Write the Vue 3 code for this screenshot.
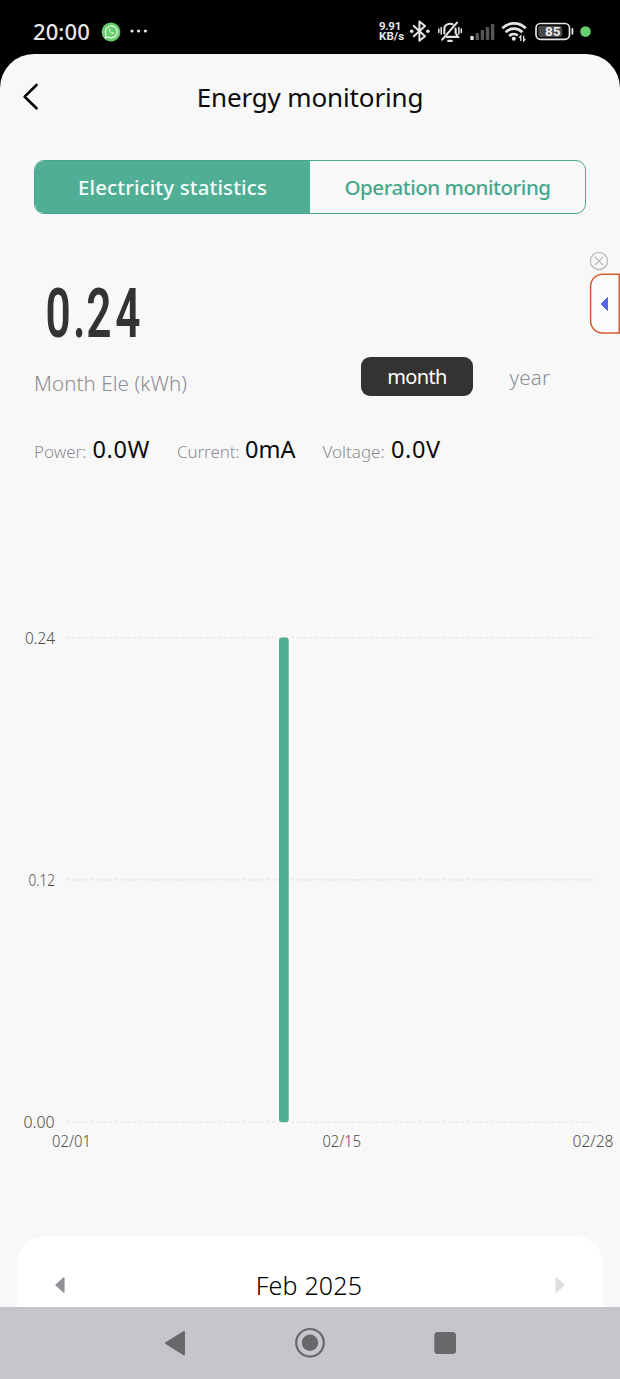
<script setup>
const readings = [
  { key: 'power', label: 'Power:', value: '0.0W' },
  { key: 'current', label: 'Current:', value: '0mA' },
  { key: 'voltage', label: 'Voltage:', value: '0.0V' },
]

// Chart geometry, in the units of the chart's own viewBox
const grid = [
  { label: '0.24', y: 17.5, x: 25, w: 30 },
  { label: '0.12', y: 259.9, x: 28.5, w: 26.5 },
  { label: '0.00', y: 502, x: 23.5, w: 31 },
]
const days = [
  { label: '02/01', x: 52, w: 39 },
  { label: '02/15', x: 322.5, w: 38.5 },
  { label: '02/28', x: 572.5, w: 41 },
]
const signal = [
  { x: 470.3, h: 4 },
  { x: 475.6, h: 7 },
  { x: 480.7, h: 10 },
  { x: 485.8, h: 13 },
  { x: 490.9, h: 16 },
]
</script>

<template>
  <div class="phone">
    <div class="status">
      <span class="clock">20:00</span>
      <svg class="chat" viewBox="0 0 20 20" width="20" height="20">
        <circle cx="10" cy="10" r="9.4" fill="#63ce6b" />
        <path d="M4.2 15.900l.9-3.200A5.900 5.900 0 1 1 7.400 15z" fill="none" stroke="#eefbef" stroke-width="1.2" stroke-linejoin="round" />
        <path d="M7.900 7.300c-.5 2 2.800 5.200 4.700 4.700l.6-.9-1.500-.9-.8.6c-.9-.4-1.500-1-1.900-1.900l.6-.7-.8-1.600z" fill="#eefbef" />
      </svg>
      <svg class="more" viewBox="0 0 20 6" width="20" height="6">
        <circle cx="3" cy="3" r="1.6" /><circle cx="9.600" cy="3" r="1.6" /><circle cx="16.400" cy="3" r="1.6" />
      </svg>
      <div class="net">
        <span class="rate">9.91</span>
        <span class="unit">KB/s</span>
      </div>
      <svg class="system" viewBox="408 0 212 54" width="212" height="54">
        <g fill="none" stroke="#e6e6e6" stroke-width="2" stroke-linejoin="round" stroke-linecap="round">
          <path d="M413.800 25.900l11.200 10.300-5.600 4.600V21.400l5.600 4.600-11.200 10.300" />
        </g>
        <circle cx="411.700" cy="31.200" r="1.800" fill="#e6e6e6" />
        <circle cx="427.900" cy="31.200" r="1.800" fill="#e6e6e6" />
        <g fill="none" stroke="#e6e6e6" stroke-width="2.100" stroke-linecap="round">
          <path d="M442.200 39.600L457 22.600" />
          <path d="M444.300 33.500v-4c0-3.200 2.200-5.400 5.400-5.700 1.100-.1 2 .1 2.900.5" />
          <path d="M455.600 28.500v4.200l2.300 4.200h-11.200" />
          <path d="M448.200 40.900h3.600" />
          <path d="M441.200 27.500v6.500M438.800 29v3.500M458.900 27.500v6.500M461.300 29v3.500" stroke-width="1.500" />
        </g>
        <rect v-for="(bar, i) in signal" :key="bar.x" :x="bar.x" :y="40 - bar.h" width="3.400" :height="bar.h" rx="0.800" :fill="i ? '#565656' : '#e6e6e6'" />
        <g fill="none" stroke="#e6e6e6" stroke-width="2.700">
          <path d="M502.300 28.300a16.400 16.400 0 0 1 23.400 0" />
          <path d="M505.700 32.200a11.600 11.600 0 0 1 16.600 0" />
          <path d="M509.200 35.900a6.600 6.600 0 0 1 8.600-.4" />
        </g>
        <circle cx="513.800" cy="38.800" r="2" fill="#e6e6e6" />
        <path d="M520.800 41v-5l-1.600 1.800M523.700 35.800v5l1.600-1.800" fill="none" stroke="#e6e6e6" stroke-width="1.300" />
        <rect x="536" y="23.500" width="33.500" height="15.800" rx="4.500" fill="none" stroke="#e6e6e6" stroke-width="1.700" />
        <rect x="538.300" y="25.800" width="23.800" height="11.200" rx="2" fill="#484848" />
        <path d="M572.400 28.800v5" stroke="#e6e6e6" stroke-width="1.800" stroke-linecap="round" />
        <text class="battery" x="545" y="36.400" textLength="15.500" lengthAdjust="spacingAndGlyphs">85</text>
        <circle cx="585.500" cy="31.600" r="5.300" fill="#66cf6e" />
      </svg>
    </div>

    <main class="sheet">
      <header class="header">
        <svg class="back" viewBox="0 0 18 28" width="18" height="28">
          <path d="M15.500 3L3.700 14.700l11.800 11.600" fill="none" stroke="#000" stroke-width="2.600" stroke-linecap="round" stroke-linejoin="round" />
        </svg>
        <h1 class="title">Energy monitoring</h1>
      </header>

      <div class="tabs">
        <div class="tab active"><span class="tab-one">Electricity statistics</span></div>
        <div class="tab"><span class="tab-two">Operation monitoring</span></div>
      </div>

      <section class="summary">
        <div>
          <svg class="total" viewBox="0 0 120 80" width="120" height="80">
            <text transform="scale(0.64 1)" x="18 61 81.500 127" y="63.500">0.24</text>
          </svg>
          <div class="caption">Month Ele (kWh)</div>
        </div>
        <div class="range">
          <span class="pill">month</span>
          <span class="year">year</span>
        </div>
      </section>

      <section class="readings">
        <div v-for="r in readings" :key="r.key" class="reading" :class="r.key">
          <span class="name">{{ r.label }}</span><span class="value">{{ r.value }}</span>
        </div>
      </section>

      <svg class="chart" viewBox="0 0 620 540" width="620" height="540">
        <g v-for="g in grid" :key="g.label">
          <line x1="66" x2="596" :y1="g.y" :y2="g.y" stroke="#e3e3e3" stroke-width="1.200" stroke-dasharray="3.500 2.570" />
          <text :x="g.x" :y="g.y + 6.300" :textLength="g.w" lengthAdjust="spacingAndGlyphs">{{ g.label }}</text>
        </g>
        <rect x="279" y="17.500" width="9.700" height="484.700" rx="3" fill="#4fae94" />
        <text v-for="d in days" :key="d.label" :x="d.x" y="527" :textLength="d.w" lengthAdjust="spacingAndGlyphs">{{ d.label }}</text>
      </svg>

      <section class="period">
        <svg viewBox="0 0 10 18" width="10" height="18">
          <path d="M9 1.800v14.400L.9 9z" fill="#909195" stroke="#909195" stroke-width="1.200" stroke-linejoin="round" />
        </svg>
        <span class="month-name">Feb 2025</span>
        <svg viewBox="0 0 10 18" width="10" height="18">
          <path d="M1 1.800v14.400L9.100 9z" fill="#dedede" stroke="#dedede" stroke-width="1.200" stroke-linejoin="round" />
        </svg>
      </section>

      <svg class="dismiss" viewBox="0 0 20 20" width="20" height="20">
        <g fill="none" stroke="#b9b9b9" stroke-width="1.300" stroke-linecap="round">
          <circle cx="10" cy="10" r="8.600" /><path d="M6.100 6.100l7.800 7.800M13.900 6.100l-7.800 7.800" />
        </g>
      </svg>
      <svg class="drawer" viewBox="0 0 31 61" width="31" height="61">
        <path d="M30.200 1.200H13.500A12 12 0 0 0 1.600 13.200V48A12 12 0 0 0 13.500 60H30.200z" fill="#fcfcfc" stroke="#d4592f" stroke-width="1.500" />
        <path d="M18.500 24.500v13L12.100 31z" fill="#5468e8" stroke="#5468e8" stroke-linejoin="round" />
      </svg>
    </main>

    <nav class="nav">
      <svg viewBox="0 0 310 72" width="310" height="72">
        <g fill="#67686a">
          <path d="M29 25v22.500L11 36.200z" stroke="#67686a" stroke-width="2" stroke-linejoin="round" />
          <circle cx="155" cy="35.800" r="8.200" />
          <circle cx="155" cy="35.800" r="13.800" fill="none" stroke="#67686a" stroke-width="2.200" />
          <rect x="279.300" y="25" width="21.700" height="22" rx="3.500" />
        </g>
      </svg>
    </nav>
  </div>
</template>

<style>
html,
body {
  background: #000;
}
</style>

<style scoped>
.phone {
  width: 620px;
  height: 1379px;
  display: flex;
  flex-direction: column;
  overflow: hidden;
  background: #000;
  font-family: "Noto Sans", sans-serif;
}
.status {
  height: 54px;
  flex: none;
  display: flex;
  align-items: center;
  color: #e6e6e6;
}
.clock {
  width: 67px;
  margin: 7px 0 0 33px;
  font-size: 22px;
  font-weight: 500;
  line-height: 28px;
  letter-spacing: 0.1px;
}
.chat {
  margin-top: 9px;
  margin-left: 1px;
}
.more {
  margin: 8px 0 0 8px;
  fill: #e6e6e6;
}
.net {
  width: 29px;
  margin: 8px 0 0 auto;
  display: flex;
  flex-direction: column;
  font: 700 11.5px/10px Roboto, sans-serif;
}
.rate {
  letter-spacing: -0.3px;
}
.unit {
  letter-spacing: 0.1px;
}
.battery {
  font: 700 13px Roboto, sans-serif;
  fill: #f0f0f0;
}
.sheet {
  position: relative;
  height: 1253px;
  flex: none;
  display: flex;
  flex-direction: column;
  background: #f8f8f8;
  border-radius: 34px 34px 0 0;
  overflow: hidden;
}
.header {
  height: 106px;
  flex: none;
  display: grid;
  grid-template-columns: 50px 1fr 50px;
  align-items: start;
}
.back {
  margin: 28px 0 0 21px;
}
.title {
  margin: 25px 0 0;
  text-align: center;
  font-size: 26px;
  font-weight: 400;
  line-height: 36px;
  letter-spacing: -0.15px;
  color: #0a0a0a;
}
.tabs {
  height: 54px;
  flex: none;
  margin: 0 34px;
  box-sizing: border-box;
  display: flex;
  border: 1.5px solid #45a88c;
  border-radius: 10px;
  overflow: hidden;
}
.tab {
  flex: 1;
  text-align: center;
  font-size: 20.5px;
  font-weight: 500;
  line-height: 52px;
  color: #45a88c;
}
.tab-one {
  letter-spacing: 0.1px;
}
.tab-two {
  letter-spacing: -0.45px;
}
.active {
  background: #4fae94;
  color: #f4fffc;
}
.summary {
  height: 212px;
  flex: none;
  padding: 0 34px;
  display: flex;
  justify-content: space-between;
}
.total {
  display: block;
  height: 80px;
  margin: 59px 0 0;
  font: 600 69px Roboto, sans-serif;
  fill: #333;
}
.caption {
  margin-top: 16px;
  font-size: 20.5px;
  font-weight: 300;
  line-height: 28px;
  letter-spacing: 0.1px;
  color: #8c8d94;
  white-space: nowrap;
  width: 200px;
}
.range {
  display: flex;
  align-items: center;
  height: 40px;
  margin: 143px 2px 0 0;
  font-size: 20.5px;
}
.pill {
  width: 112px;
  height: 39px;
  margin-top: -1px;
  line-height: 40px;
  border-radius: 9px;
  background: #333;
  color: #fff;
  text-align: center;
  font-size: 20px;
  letter-spacing: -0.6px;
}
.year {
  margin-left: 36.5px;
  width: 74.5px;
  font-weight: 300;
  letter-spacing: 0.2px;
  color: #8c8d94;
}
.readings {
  height: 194px;
  flex: none;
  padding-left: 34px;
  display: flex;
}
.reading {
  display: flex;
  align-items: baseline;
  height: 36px;
  margin-top: 5px;
  white-space: nowrap;
}
.name {
  font-size: 17px;
  font-weight: 300;
  color: #8c8d94;
}
.value {
  font-size: 23.5px;
  line-height: 36px;
  letter-spacing: 0.6px;
  color: #0a0a0a;
}
.current .value { letter-spacing: 0; }
.power, .current { width: 143px; }
.power .name { width: 58.5px; }
.current .name { width: 68px; letter-spacing: -0.1px; }
.voltage { margin-left: 2.5px; }
.voltage .name { width: 68.5px; }
.chart {
  flex: none;
  font-size: 16px;
  font-weight: 300;
  fill: #4c4c4c;
}
.period {
  height: 71px;
  flex: none;
  margin: 76px 17px 0;
  padding: 13px 38px 0;
  box-sizing: border-box;
  display: flex;
  align-items: flex-start;
  justify-content: space-between;
  background: #fff;
  border-radius: 28px 28px 0 0;
}
.period svg {
  margin-top: 27px;
}
.month-name {
  margin: 18px 2px 0 0;
  font-size: 25px;
  font-weight: 300;
  line-height: 36px;
  letter-spacing: 0.2px;
  color: #000;
}
.dismiss {
  position: absolute;
  left: 588.5px;
  top: 197px;
}
.drawer {
  position: absolute;
  left: 589px;
  top: 219px;
}
.nav {
  height: 72px;
  flex: none;
  display: flex;
  justify-content: center;
  background: #c5c6ca;
}
</style>
